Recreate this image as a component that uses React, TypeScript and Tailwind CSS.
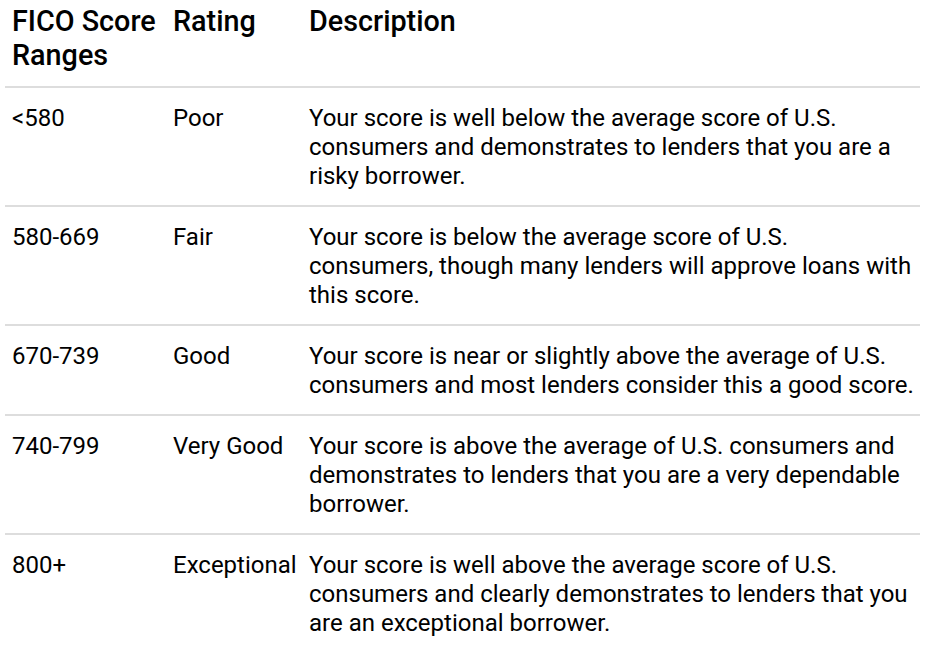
import React from "react";

const rows = [
  { range: "<580", rating: "Poor", desc: "Your score is well below the average score of U.S. consumers and demonstrates to lenders that you are a risky borrower." },
  { range: "580-669", rating: "Fair", desc: "Your score is below the average score of U.S. consumers, though many lenders will approve loans with this score." },
  { range: "670-739", rating: "Good", desc: "Your score is near or slightly above the average of U.S. consumers and most lenders consider this a good score." },
  { range: "740-799", rating: "Very Good", desc: "Your score is above the average of U.S. consumers and demonstrates to lenders that you are a very dependable borrower." },
  { range: "800+", rating: "Exceptional", desc: "Your score is well above the average score of U.S. consumers and clearly demonstrates to lenders that you are an exceptional borrower." },
];

export default function App() {
  return (
    <div className="w-[936px] h-[666px] bg-white overflow-hidden" style={{ fontFamily: "Roboto, 'Liberation Sans', sans-serif" }}>
      <table className="ml-[5px] w-[915px] border-collapse text-black table-fixed">
        <colgroup>
          <col className="w-[161px]" />
          <col className="w-[136px]" />
          <col className="w-[618px]" />
        </colgroup>
        <thead>
          <tr className="border-b-2 border-[#dddddd]">
            <th className="text-left align-top font-medium text-[28.75px] leading-[34px] pt-[4px] pb-[14px] px-[7px]">FICO Score Ranges</th>
            <th className="text-left align-top font-medium text-[28.75px] leading-[34px] pt-[4px] pb-[14px] px-[7px]">Rating</th>
            <th className="text-left align-top font-medium text-[28.75px] leading-[34px] pt-[4px] pb-[14px] pl-[7px] pr-[5px]">Description</th>
          </tr>
        </thead>
        <tbody>
          {rows.map((r, i) => (
            <tr key={i} className={i < rows.length - 1 ? "border-b-2 border-[#dddddd]" : ""}>
              <td className="align-top text-[24px] leading-[29px] pt-[16px] pb-[14px] px-[7px]">{r.range}</td>
              <td className="align-top text-[24px] leading-[29px] pt-[16px] pb-[14px] px-[7px]">{r.rating}</td>
              <td className="align-top text-[24px] leading-[29px] pt-[16px] pb-[14px] pl-[7px] pr-[5px]">{r.desc}</td>
            </tr>
          ))}
        </tbody>
      </table>
    </div>
  );
}
